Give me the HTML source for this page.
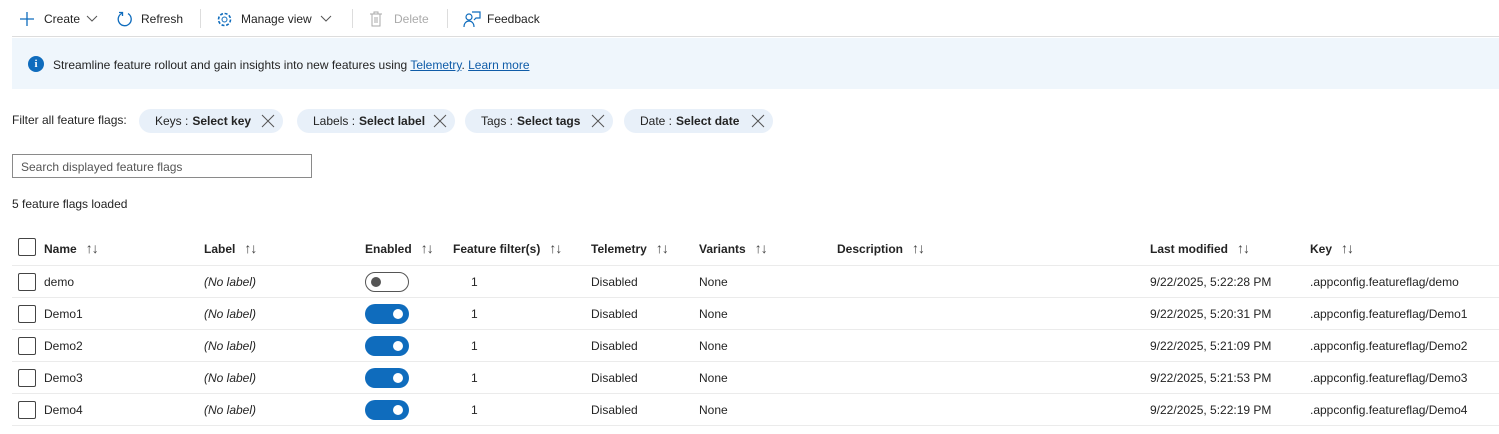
<!DOCTYPE html>
<html><head><style>
*{box-sizing:border-box;margin:0;padding:0}
body{width:1499px;height:434px;background:#fff;font-family:"Liberation Sans",sans-serif;font-size:12px;color:#242424;position:relative;overflow:hidden}
.a{position:absolute;white-space:nowrap}
.tb{top:11px;height:16px;display:flex;align-items:center}
.sep{position:absolute;top:9px;width:1px;height:19px;background:#ddd}
.chip{position:absolute;top:109px;height:24px;border-radius:12px;background:#e8f0f9;display:flex;align-items:center;padding-left:16px}
.chip b{margin-left:4px}
.chip .x{position:absolute;right:8px;top:5px}
.cb{position:absolute;left:18px;width:18px;height:18px;border:1px solid #444;border-radius:2px;background:#fff}
.hl{position:absolute;left:12px;right:0;height:1px;background:#ebebeb}
.tg{position:absolute;left:365px;width:44px;height:20px;border-radius:10px}
.on{background:#0f6cbd}
.on::after{content:"";position:absolute;right:6px;top:5px;width:10px;height:10px;border-radius:50%;background:#fff}
.off{border:1px solid #555;background:#fff}
.off::after{content:"";position:absolute;left:5px;top:4px;width:10px;height:10px;border-radius:50%;background:#555}
.hd{font-weight:bold;top:240px}
.ar{font-weight:normal;color:#444;margin-left:9px;font-size:14px;letter-spacing:-1px}
</style></head><body>
<div class="a tb" style="left:19px"><svg width="16" height="16"><path d="M8 1v14M1 8h14" stroke="#0f6cbd" stroke-width="1.3"/></svg><span style="margin-left:9px">Create</span><svg style="margin-left:6px" width="12" height="8"><path d="M1 1l5 5 5-5" stroke="#555" fill="none"/></svg></div>
<div class="a tb" style="left:116px"><svg width="17" height="17"><path d="M6 2.3A6.5 6.5 0 1 0 12 2.6" stroke="#0f6cbd" fill="none" stroke-width="1.3"/><path d="M3 1.5h3.5v3.5" stroke="#0f6cbd" fill="none" stroke-width="1.3"/></svg><span style="margin-left:8px">Refresh</span></div>
<div class="sep" style="left:200px"></div>
<div class="a tb" style="left:216px"><svg width="17" height="17"><circle cx="8.5" cy="8.5" r="2.5" stroke="#0f6cbd" fill="none"/><circle cx="8.5" cy="8.5" r="6" stroke="#0f6cbd" fill="none" stroke-dasharray="3 1.7" stroke-width="1.6"/></svg><span style="margin-left:8px">Manage view</span><svg style="margin-left:8px" width="12" height="8"><path d="M1 1l5 5 5-5" stroke="#555" fill="none"/></svg></div>
<div class="sep" style="left:352px"></div>
<div class="a tb" style="left:369px;color:#aaa"><svg width="14" height="16"><path d="M1 3h12M5 3V1h4v2M3 3v12h8V3M6 6v6M8 6v6" stroke="#aaa" fill="none"/></svg><span style="margin-left:11px">Delete</span></div>
<div class="sep" style="left:447px"></div>
<div class="a tb" style="left:463px"><svg width="18" height="17"><circle cx="6" cy="6" r="3" stroke="#0f6cbd" fill="none" stroke-width="1.2"/><path d="M1 16c0-4 2.5-6 5-6s5 2 5 6M9 1h8v6h-4l-2 2" stroke="#0f6cbd" fill="none" stroke-width="1.2"/></svg><span style="margin-left:6px">Feedback</span></div>
<div class="a" style="left:12px;top:36px;width:1487px;height:1px;background:#ddd"></div>
<div class="a" style="left:12px;top:38px;width:1487px;height:51px;background:#eff6fc"></div>
<div class="a" style="left:28px;top:56px;width:16px;height:16px;border-radius:50%;background:#0f6cbd;color:#fff;font-weight:bold;font-size:11px;text-align:center;line-height:16px;font-family:'Liberation Serif',serif">i</div>
<div class="a" style="left:53px;top:58px">Streamline feature rollout and gain insights into new features using <u style="color:#0f5ca8">Telemetry</u>. <u style="color:#0f5ca8">Learn more</u></div>
<div class="a" style="left:12px;top:113px">Filter all feature flags:</div>
<div class="chip" style="left:139px;width:144px">Keys :<b>Select key</b><svg class="x" width="14" height="14"><path d="M1 1l12 12M13 1L1 13" stroke="#555"/></svg></div>
<div class="chip" style="left:297px;width:158px">Labels :<b>Select label</b><svg class="x" width="14" height="14"><path d="M1 1l12 12M13 1L1 13" stroke="#555"/></svg></div>
<div class="chip" style="left:465px;width:148px">Tags :<b>Select tags</b><svg class="x" width="14" height="14"><path d="M1 1l12 12M13 1L1 13" stroke="#555"/></svg></div>
<div class="chip" style="left:624px;width:149px">Date :<b>Select date</b><svg class="x" width="14" height="14"><path d="M1 1l12 12M13 1L1 13" stroke="#555"/></svg></div>
<div class="a" style="left:12px;top:154px;width:300px;height:24px;border:1px solid #8a8a8a;padding:5px 8px;color:#555">Search displayed feature flags</div>
<div class="a" style="left:12px;top:197px">5 feature flags loaded</div>
<div class="cb" style="top:238px"></div>
<div class="a hd" style="left:44px">Name<span class="ar">↑↓</span></div>
<div class="a hd" style="left:204px">Label<span class="ar">↑↓</span></div>
<div class="a hd" style="left:365px">Enabled<span class="ar">↑↓</span></div>
<div class="a hd" style="left:453px">Feature filter(s)<span class="ar">↑↓</span></div>
<div class="a hd" style="left:591px">Telemetry<span class="ar">↑↓</span></div>
<div class="a hd" style="left:699px">Variants<span class="ar">↑↓</span></div>
<div class="a hd" style="left:837px">Description<span class="ar">↑↓</span></div>
<div class="a hd" style="left:1150px">Last modified<span class="ar">↑↓</span></div>
<div class="a hd" style="left:1310px">Key<span class="ar">↑↓</span></div>
<div class="hl" style="top:265px"></div>

<div class="cb" style="top:273px"></div><div class="a" style="left:44px;top:275px">demo</div><div class="a" style="left:204px;top:275px;font-style:italic">(No label)</div><div class="tg off" style="top:272px"></div><div class="a" style="left:471px;top:275px">1</div><div class="a" style="left:591px;top:275px">Disabled</div><div class="a" style="left:699px;top:275px">None</div><div class="a" style="left:1150px;top:275px">9/22/2025, 5:22:28 PM</div><div class="a" style="left:1310px;top:275px">.appconfig.featureflag/demo</div>
<div class="hl" style="top:297px"></div>
<div class="cb" style="top:305px"></div><div class="a" style="left:44px;top:307px">Demo1</div><div class="a" style="left:204px;top:307px;font-style:italic">(No label)</div><div class="tg on" style="top:304px"></div><div class="a" style="left:471px;top:307px">1</div><div class="a" style="left:591px;top:307px">Disabled</div><div class="a" style="left:699px;top:307px">None</div><div class="a" style="left:1150px;top:307px">9/22/2025, 5:20:31 PM</div><div class="a" style="left:1310px;top:307px">.appconfig.featureflag/Demo1</div>
<div class="hl" style="top:329px"></div>
<div class="cb" style="top:337px"></div><div class="a" style="left:44px;top:339px">Demo2</div><div class="a" style="left:204px;top:339px;font-style:italic">(No label)</div><div class="tg on" style="top:336px"></div><div class="a" style="left:471px;top:339px">1</div><div class="a" style="left:591px;top:339px">Disabled</div><div class="a" style="left:699px;top:339px">None</div><div class="a" style="left:1150px;top:339px">9/22/2025, 5:21:09 PM</div><div class="a" style="left:1310px;top:339px">.appconfig.featureflag/Demo2</div>
<div class="hl" style="top:361px"></div>
<div class="cb" style="top:369px"></div><div class="a" style="left:44px;top:371px">Demo3</div><div class="a" style="left:204px;top:371px;font-style:italic">(No label)</div><div class="tg on" style="top:368px"></div><div class="a" style="left:471px;top:371px">1</div><div class="a" style="left:591px;top:371px">Disabled</div><div class="a" style="left:699px;top:371px">None</div><div class="a" style="left:1150px;top:371px">9/22/2025, 5:21:53 PM</div><div class="a" style="left:1310px;top:371px">.appconfig.featureflag/Demo3</div>
<div class="hl" style="top:393px"></div>
<div class="cb" style="top:401px"></div><div class="a" style="left:44px;top:403px">Demo4</div><div class="a" style="left:204px;top:403px;font-style:italic">(No label)</div><div class="tg on" style="top:400px"></div><div class="a" style="left:471px;top:403px">1</div><div class="a" style="left:591px;top:403px">Disabled</div><div class="a" style="left:699px;top:403px">None</div><div class="a" style="left:1150px;top:403px">9/22/2025, 5:22:19 PM</div><div class="a" style="left:1310px;top:403px">.appconfig.featureflag/Demo4</div>
<div class="hl" style="top:425px"></div>
</body></html>
